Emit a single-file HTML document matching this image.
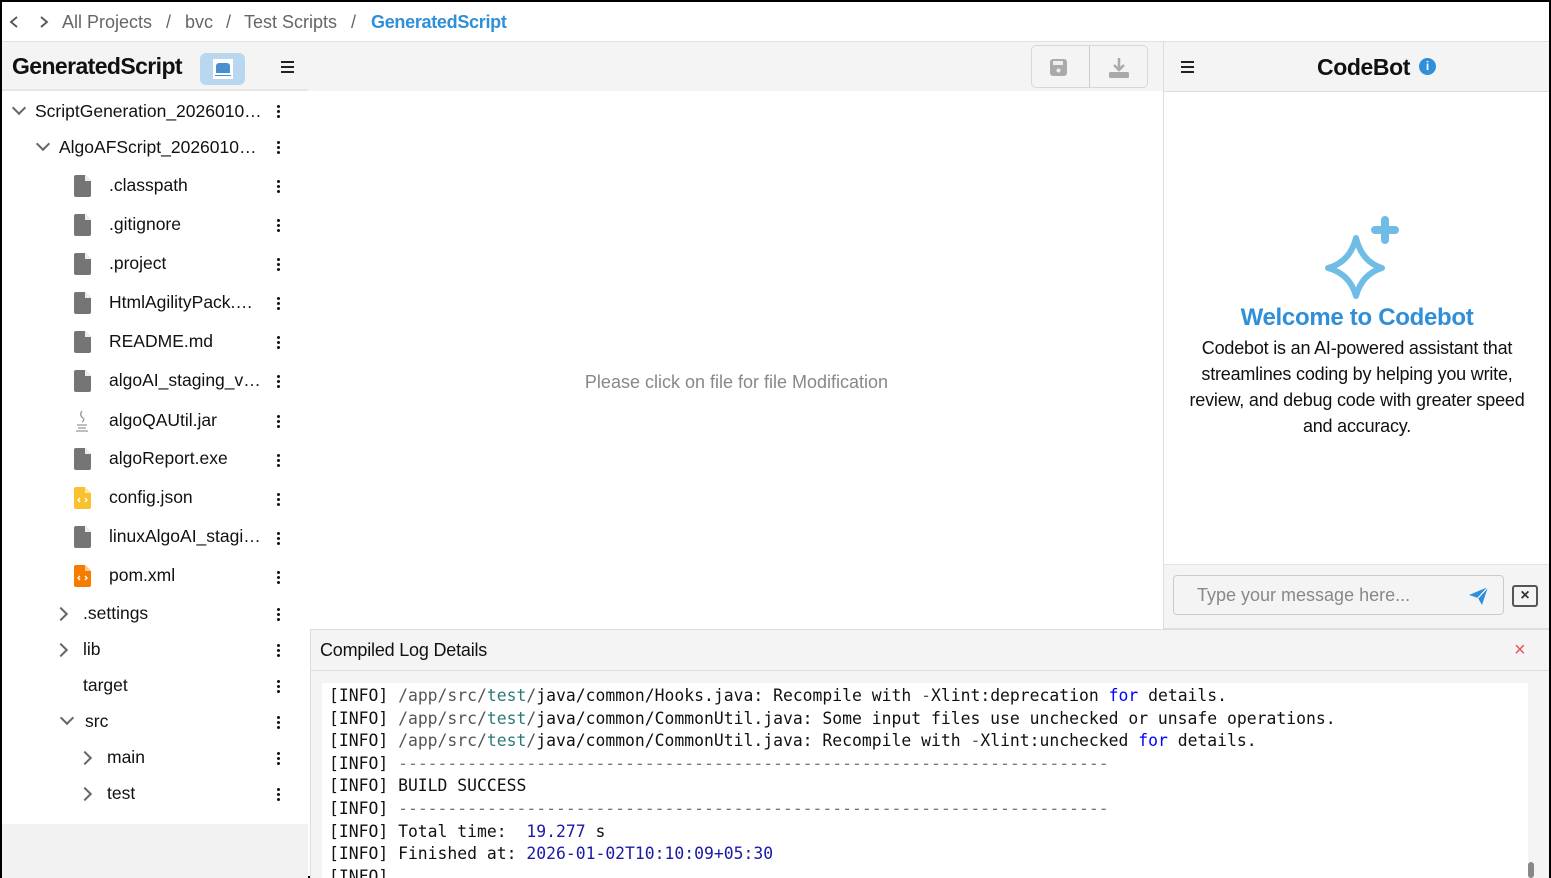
<!DOCTYPE html>
<html><head><meta charset="utf-8"><style>
*{box-sizing:border-box;margin:0;padding:0}
html,body{width:1551px;height:878px;overflow:hidden}
body{font-family:"Liberation Sans",Arial,sans-serif;background:#fff;position:relative;border:2px solid #000;}
.abs{position:absolute}
.crumb{left:0;top:0;width:1547px;height:40px;background:#fff;border-bottom:1px solid #e2e2e2;font-size:18px;color:#666;}
.crumb span{position:absolute;top:10px}
.lefthead{left:0;top:40px;width:306px;height:49px;background:#f4f4f4;border-bottom:2px solid #e6e6e6}
.tree{left:2px;top:89px;width:302px;height:733px;background:#fff}
.leftrest{left:0;top:822px;width:306px;height:54px;background:#f2f2f2}
.row{position:absolute;font-size:17.5px;color:#111;white-space:nowrap;overflow:hidden;text-overflow:ellipsis;max-width:152px}
.dots{position:absolute;left:273px;width:4px}
.dots i{display:block;width:3px;height:3px;background:#111;border-radius:50%;margin-bottom:2px}
.fi{position:absolute;width:17px;height:22px}
.chev{position:absolute;width:10px;height:10px;border-right:2px solid #666;border-bottom:2px solid #666}
.toolbar{left:306px;top:40px;width:855px;height:49px;background:#f4f4f4}
.editor{left:308px;top:89px;width:853px;height:537px;background:#fff}
.rhead{left:1161px;top:40px;width:386px;height:50px;background:#f4f4f4;border-left:1px solid #ddd;border-bottom:1px solid #ddd}
.rbody{left:1161px;top:90px;width:386px;height:472px;background:#fff;border-left:1px solid #ddd}
.rinput{left:1161px;top:562px;width:386px;height:65px;background:#f4f4f4;border-left:1px solid #ddd;border-top:1px solid #e4e4e4;border-bottom:1px solid #ddd}
.loghead{left:308px;top:627px;width:1239px;height:42px;background:#f4f4f4;border-top:1px solid #ddd;border-bottom:1px solid #ddd;border-left:1px solid #ddd}
.logbody{left:308px;top:669px;width:1239px;height:207px;background:#f4f4f4;border-left:1px solid #ddd}
.logbox{left:320px;top:681px;width:1206px;height:195px;background:#fff;font-family:"DejaVu Sans Mono","Liberation Mono",monospace;font-size:16.4px;line-height:22.6px;color:#111;padding:2px 0 0 7px;white-space:pre;overflow:hidden}
.b{color:#0000ff}.g{color:#555}.t{color:#2c7a7a}.n{color:#1a1aa6}.d{color:#6a7a8a}
</style></head><body>
<div class="abs crumb">
<svg class="abs" style="left:6px;top:13px" width="12" height="14"><path d="M9 2 L3 7 L9 12" stroke="#555" stroke-width="1.8" fill="none"/></svg>
<svg class="abs" style="left:36px;top:13px" width="12" height="14"><path d="M3 2 L9 7 L3 12" stroke="#555" stroke-width="1.8" fill="none"/></svg>
<span style="left:60px">All Projects</span><span style="left:164px">/</span><span style="left:183px">bvc</span><span style="left:224px">/</span><span style="left:242px">Test Scripts</span><span style="left:349px">/</span><span style="left:369px;color:#2f8fd8;font-weight:bold;letter-spacing:-0.3px">GeneratedScript</span>
</div>
<div class="abs lefthead">
<div class="abs" style="left:10px;top:11px;font-size:23px;font-weight:bold;color:#111;letter-spacing:-0.6px">GeneratedScript</div>
<div class="abs" style="left:198px;top:11px;width:45px;height:32px;background:#b9d7ee;border-radius:6px"><div class="abs" style="left:13px;top:6px;width:20px;height:20px;background:#fff"><div class="abs" style="left:3px;top:4px;width:14px;height:10px;background:#4a90d0;border-radius:3px 3px 0 0"></div><div class="abs" style="left:2px;top:16px;width:16px;height:1px;background:#4a90d0"></div></div></div>
<div class="abs" style="left:279px;top:19px;width:13px"><div style="height:2px;background:#222;margin-bottom:3px"></div><div style="height:2px;background:#222;margin-bottom:3px"></div><div style="height:2px;background:#222"></div></div>
</div>
<div class="abs tree">
<div class="chev" style="left:10px;top:12px;transform:rotate(45deg)"></div><div class="row" style="left:31px;top:10px;max-width:228px">ScriptGeneration_2026010…</div><div class="dots" style="top:14px"><i></i><i></i><i></i></div>
<div class="chev" style="left:34px;top:48px;transform:rotate(45deg)"></div><div class="row" style="left:55px;top:46px;max-width:200px">AlgoAFScript_2026010…</div><div class="dots" style="top:50px"><i></i><i></i><i></i></div>

<svg class="fi" style="left:70px;top:84px" viewBox="0 0 17 22"><path d="M2 0H11L17 6V20Q17 22 15 22H2Q0 22 0 20V2Q0 0 2 0Z" fill="#757575"/><path d="M11 0V6H17" fill="#eee"/></svg><div class="row" style="left:105px;top:84px">.classpath</div><div class="dots" style="top:89px"><i></i><i></i><i></i></div>
<svg class="fi" style="left:70px;top:123px" viewBox="0 0 17 22"><path d="M2 0H11L17 6V20Q17 22 15 22H2Q0 22 0 20V2Q0 0 2 0Z" fill="#757575"/><path d="M11 0V6H17" fill="#eee"/></svg><div class="row" style="left:105px;top:123px">.gitignore</div><div class="dots" style="top:128px"><i></i><i></i><i></i></div>
<svg class="fi" style="left:70px;top:162px" viewBox="0 0 17 22"><path d="M2 0H11L17 6V20Q17 22 15 22H2Q0 22 0 20V2Q0 0 2 0Z" fill="#757575"/><path d="M11 0V6H17" fill="#eee"/></svg><div class="row" style="left:105px;top:162px">.project</div><div class="dots" style="top:167px"><i></i><i></i><i></i></div>
<svg class="fi" style="left:70px;top:201px" viewBox="0 0 17 22"><path d="M2 0H11L17 6V20Q17 22 15 22H2Q0 22 0 20V2Q0 0 2 0Z" fill="#757575"/><path d="M11 0V6H17" fill="#eee"/></svg><div class="row" style="left:105px;top:201px;max-width:148px">HtmlAgilityPack.…</div><div class="dots" style="top:206px"><i></i><i></i><i></i></div>
<svg class="fi" style="left:70px;top:240px" viewBox="0 0 17 22"><path d="M2 0H11L17 6V20Q17 22 15 22H2Q0 22 0 20V2Q0 0 2 0Z" fill="#757575"/><path d="M11 0V6H17" fill="#eee"/></svg><div class="row" style="left:105px;top:240px">README.md</div><div class="dots" style="top:245px"><i></i><i></i><i></i></div>
<svg class="fi" style="left:70px;top:279px" viewBox="0 0 17 22"><path d="M2 0H11L17 6V20Q17 22 15 22H2Q0 22 0 20V2Q0 0 2 0Z" fill="#757575"/><path d="M11 0V6H17" fill="#eee"/></svg><div class="row" style="left:105px;top:279px">algoAI_staging_v…</div><div class="dots" style="top:284px"><i></i><i></i><i></i></div>
<svg class="fi" style="left:70px;top:319px" viewBox="0 0 17 22"><path d="M8 1Q5 5 9 8Q11 10 8 12M3 15H13M4 18H12M2 21H14" stroke="#999" stroke-width="1.3" fill="none"/></svg><div class="row" style="left:105px;top:319px">algoQAUtil.jar</div><div class="dots" style="top:324px"><i></i><i></i><i></i></div>
<svg class="fi" style="left:70px;top:357px" viewBox="0 0 17 22"><path d="M2 0H11L17 6V20Q17 22 15 22H2Q0 22 0 20V2Q0 0 2 0Z" fill="#757575"/><path d="M11 0V6H17" fill="#eee"/></svg><div class="row" style="left:105px;top:357px">algoReport.exe</div><div class="dots" style="top:363px"><i></i><i></i><i></i></div>
<svg class="fi" style="left:70px;top:396px" viewBox="0 0 17 22"><path d="M2 0H11L17 6V20Q17 22 15 22H2Q0 22 0 20V2Q0 0 2 0Z" fill="#fbc02d"/><path d="M11 0V6H17" fill="#fde9a8"/><path d="M6 11L4 13L6 15M11 11L13 13L11 15" stroke="#fff" stroke-width="1.3" fill="none"/></svg><div class="row" style="left:105px;top:396px">config.json</div><div class="dots" style="top:402px"><i></i><i></i><i></i></div>
<svg class="fi" style="left:70px;top:435px" viewBox="0 0 17 22"><path d="M2 0H11L17 6V20Q17 22 15 22H2Q0 22 0 20V2Q0 0 2 0Z" fill="#757575"/><path d="M11 0V6H17" fill="#eee"/></svg><div class="row" style="left:105px;top:435px">linuxAlgoAI_stagi…</div><div class="dots" style="top:441px"><i></i><i></i><i></i></div>
<svg class="fi" style="left:70px;top:474px" viewBox="0 0 17 22"><path d="M2 0H11L17 6V20Q17 22 15 22H2Q0 22 0 20V2Q0 0 2 0Z" fill="#f57c00"/><path d="M11 0V6H17" fill="#fcc98f"/><path d="M6 11L4 13L6 15M11 11L13 13L11 15" stroke="#fff" stroke-width="1.3" fill="none"/></svg><div class="row" style="left:105px;top:474px">pom.xml</div><div class="dots" style="top:480px"><i></i><i></i><i></i></div>

<div class="chev" style="left:52px;top:518px;transform:rotate(-45deg)"></div><div class="row" style="left:79px;top:512px">.settings</div><div class="dots" style="top:517px"><i></i><i></i><i></i></div>
<div class="chev" style="left:52px;top:554px;transform:rotate(-45deg)"></div><div class="row" style="left:79px;top:548px">lib</div><div class="dots" style="top:553px"><i></i><i></i><i></i></div>
<div class="row" style="left:79px;top:584px">target</div><div class="dots" style="top:589px"><i></i><i></i><i></i></div>
<div class="chev" style="left:58px;top:622px;transform:rotate(45deg)"></div><div class="row" style="left:81px;top:620px">src</div><div class="dots" style="top:625px"><i></i><i></i><i></i></div>
<div class="chev" style="left:76px;top:662px;transform:rotate(-45deg)"></div><div class="row" style="left:103px;top:656px">main</div><div class="dots" style="top:661px"><i></i><i></i><i></i></div>
<div class="chev" style="left:76px;top:698px;transform:rotate(-45deg)"></div><div class="row" style="left:103px;top:692px">test</div><div class="dots" style="top:697px"><i></i><i></i><i></i></div>
</div>
<div class="abs leftrest"></div>
<div class="abs toolbar">
<div class="abs" style="left:723px;top:3px;width:117px;height:43px;border:1px solid #d8d8d8;border-radius:5px;background:#f4f4f4"><div class="abs" style="left:57px;top:0;width:1px;height:41px;background:#ccc"></div>
<svg class="abs" style="left:18px;top:13px" width="18" height="18"><rect x="0" y="0" width="17" height="17" rx="3" fill="#aaa"/><rect x="3" y="2" width="10" height="4" fill="#eee"/><circle cx="8.5" cy="11.5" r="2" fill="#eee"/></svg>
<svg class="abs" style="left:76px;top:11px" width="22" height="22"><path d="M11 1V12M6 8L11 13L16 8" stroke="#aaa" stroke-width="2.5" fill="none"/><rect x="1" y="15" width="20" height="6" rx="1.5" fill="#aaa"/></svg></div>
</div>
<div class="abs editor"><div class="abs" style="left:0;width:853px;top:281px;text-align:center;font-size:18px;color:#888">Please click on file for file Modification</div></div>
<div class="abs rhead">
<div class="abs" style="left:17px;top:19px;width:13px"><div style="height:2px;background:#222;margin-bottom:3px"></div><div style="height:2px;background:#222;margin-bottom:3px"></div><div style="height:2px;background:#222"></div></div>
<div class="abs" style="left:153px;top:12px;font-size:23px;font-weight:bold;color:#111;letter-spacing:-0.4px">CodeBot</div>
<div class="abs" style="left:255px;top:16px;width:17px;height:17px;border-radius:50%;background:#2f8fd8;color:#fff;font-size:12px;font-weight:bold;text-align:center;line-height:17px">i</div>
</div>
<div class="abs rbody">
<svg class="abs" style="left:150px;top:124px" width="90" height="86" viewBox="0 0 90 86"><path d="M42 22 Q48 46 68 52 Q48 58 42 80 Q36 58 14 52 Q36 46 42 22Z" stroke="#6fbde6" stroke-width="6" fill="none" stroke-linejoin="round"/><path d="M71 4 V24 M61 14 H81" stroke="#6fbde6" stroke-width="8" stroke-linecap="round"/></svg>
<div class="abs" style="left:0;width:386px;top:212px;text-align:center;font-size:24px;font-weight:bold;color:#2f8fd8;letter-spacing:-0.3px">Welcome to Codebot</div>
<div class="abs" style="left:10px;width:366px;top:243px;text-align:center;font-size:18px;line-height:26px;color:#111;letter-spacing:-0.2px">Codebot is an AI-powered assistant that streamlines coding by helping you write, review, and debug code with greater speed and accuracy.</div>
</div>
<div class="abs rinput">
<div class="abs" style="left:9px;top:10px;width:331px;height:40px;border:1px solid #ccc;border-radius:4px;background:#f4f4f4"><div class="abs" style="left:23px;top:9px;font-size:18px;color:#888">Type your message here...</div>
<svg class="abs" style="left:294px;top:10px" width="22" height="20"><path d="M1 9L20 1L14 19L10 12Z" fill="#2f8fd8"/><path d="M10 12L20 1" stroke="#fff" stroke-width="1.2"/></svg></div>
<div class="abs" style="left:348px;top:20px;width:26px;height:22px;border:2px solid #555;border-radius:3px;text-align:center;font-size:16px;line-height:17px;color:#333;font-weight:bold">×</div>
</div>
<div class="abs loghead"><div class="abs" style="left:9px;top:10px;font-size:18px;color:#111;letter-spacing:-0.2px">Compiled Log Details</div><div class="abs" style="left:1203px;top:9px;font-size:20px;color:#e55">×</div></div>
<div class="abs logbody"></div>
<div class="abs logbox">[INFO] <span class="g">/app/src/</span><span class="t">test</span><span class="g">/</span>java/common/Hooks.java: Recompile with <span class="g">-</span>Xlint:deprecation <span class="b">for</span> details.
[INFO] <span class="g">/app/src/</span><span class="t">test</span><span class="g">/</span>java/common/CommonUtil.java: Some input files use unchecked or unsafe operations.
[INFO] <span class="g">/app/src/</span><span class="t">test</span><span class="g">/</span>java/common/CommonUtil.java: Recompile with <span class="g">-</span>Xlint:unchecked <span class="b">for</span> details.
[INFO] <span class="d">------------------------------------------------------------------------</span>
[INFO] BUILD SUCCESS
[INFO] <span class="d">------------------------------------------------------------------------</span>
[INFO] Total time:  <span class="n">19.277</span> s
[INFO] Finished at: <span class="n">2026-01-02T10:10:09+05:30</span>
[INFO]</div>
<div class="abs" style="left:1526px;top:860px;width:6px;height:16px;background:#888;border-radius:3px"></div>
</body></html>
